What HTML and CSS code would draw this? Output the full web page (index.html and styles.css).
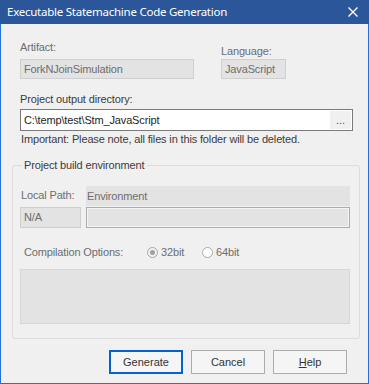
FILE: index.html
```html
<!DOCTYPE html>
<html>
<head>
<meta charset="utf-8">
<link rel="stylesheet" href="styles.css">
</head>
<body>
<div class="window">
  <div class="titlebar">
    <span class="title">Executable Statemachine Code Generation</span>
    <svg class="close" width="10" height="10" viewBox="0 0 10 10"><path d="M0.5 0.5L9.5 9.5M9.5 0.5L0.5 9.5" stroke="#fff" stroke-width="1.4" fill="none"/></svg>
  </div>
  <div class="body">
    <div class="toprow">
      <div class="col artifact">
        <div class="label dim">Artifact:</div>
        <div class="field ro">ForkNJoinSimulation</div>
      </div>
      <div class="col language">
        <div class="label dim lang-label">Language:</div>
        <div class="field ro">JavaScript</div>
      </div>
    </div>
    <div class="label dark outdir-label">Project output directory:</div>
    <div class="input">
      <span class="input-text">C:\temp\test\Stm_JavaScript</span>
      <span class="browse">...</span>
    </div>
    <div class="label dark note">Important: Please note, all files in this folder will be deleted.</div>
    <fieldset class="group">
      <legend class="legend">Project build environment</legend>
      <div class="envgrid">
        <div class="label dim lp">Local Path:</div>
        <div class="envhead">Environment</div>
        <div class="field ro na">N/A</div>
        <div class="field envfield"></div>
      </div>
      <div class="compile">
        <span class="label dim">Compilation Options:</span>
        <span class="radio checked"><span class="dot"></span></span><span class="rlabel dim">32bit</span>
        <span class="radio"></span><span class="rlabel dim">64bit</span>
      </div>
      <div class="bigbox"></div>
    </fieldset>
    <div class="buttons">
      <div class="btn default">Generate</div>
      <div class="btn">Cancel</div>
      <div class="btn"><u>H</u>elp</div>
    </div>
  </div>
</div>
</body>
</html>
```
FILE: styles.css
```css
* { box-sizing: border-box; }
html, body { margin: 0; padding: 0; }
body {
  width: 369px;
  height: 384px;
  overflow: hidden;
  font-family: "Liberation Sans", Arial, sans-serif;
  font-size: 11px;
  line-height: 13px;
  letter-spacing: -0.15px;
  color: #000;
}
.window {
  width: 369px;
  height: 384px;
  display: flex;
  flex-direction: column;
  background: #f0f0f0;
}
.titlebar {
  height: 24px;
  flex: none;
  background: #2b579a;
  display: flex;
  align-items: center;
  padding: 0 11px 0 7px;
  justify-content: space-between;
}
.title {
  font-family: "Noto Sans", "Open Sans", sans-serif;
  font-size: 11.5px;
  letter-spacing: -0.25px;
  color: #fff;
  line-height: 16px;
}
.close { display: block; }
.body {
  flex: 1;
  border: 1px solid #2470d6;
  border-top: none;
  padding: 17px 20px 0 19px;
  display: flex;
  flex-direction: column;
}
.label { white-space: nowrap; }
.dim { color: #6d6d6d; }
.dark { color: #3c3c3c; }
.toprow { display: flex; gap: 27px; }
.col { display: flex; flex-direction: column; }
.artifact { width: 174px; }
.language { width: 65px; }
.artifact .label { margin-bottom: 5px; }
.lang-label { margin-top: 4px; margin-bottom: 1px; }
.field {
  height: 20px;
  padding: 3px 3px;
  white-space: nowrap;
  overflow: hidden;
}
.ro {
  background: #e3e3e3;
  border: 1px solid #cfcfcf;
  color: #6d6d6d;
}
.outdir-label { margin-top: 14px; }
.input {
  margin-top: 3px;
  width: 333px;
  height: 22px;
  background: #fff;
  border: 1px solid #7a7a7a;
  display: flex;
  align-items: stretch;
  padding: 1px 1px 1px 3px;
  justify-content: space-between;
}
.input-text { color: #1e1e1e; line-height: 18px; }
.browse {
  width: 21px;
  background: #f0f0f0;
  color: #555;
  text-align: center;
  line-height: 18px;
  letter-spacing: 0;
}
.note { margin-top: 2px; margin-left: 1px; }
.group {
  margin: 13px 0 0 -8px;
  width: 348px;
  border: 1px solid #dcdcdc;
  border-radius: 3px;
  padding: 14px 9px 14px 7px;
}
.legend {
  padding: 0 3px 0 2px;
  margin-left: 2px;
  color: #3c3c3c;
}
.envgrid {
  display: grid;
  grid-template-columns: 61px 264px;
  column-gap: 5px;
  row-gap: 1px;
}
.lp { padding-top: 3px; margin-left: 1px; }
.envhead {
  height: 20px;
  background: #e3e3e3;
  color: #6d6d6d;
  padding: 4px 1px;
}
.na { height: 21px; }
.envfield {
  height: 21px;
  background: #e3e3e3;
  border: 1px solid #acacac;
  box-shadow: inset 0 0 0 1px #f4f4f4;
}
.compile {
  margin-top: 18px;
  display: flex;
  align-items: center;
  padding-left: 4px;
  height: 13px;
}
.compile .label { width: 123px; }
.radio {
  width: 11px;
  height: 11px;
  border-radius: 50%;
  border: 1px solid #a8a8a8;
  background: #fff;
  display: inline-flex;
  align-items: center;
  justify-content: center;
  margin-right: 3px;
}
.radio.checked { background: #f2f2f2; }
.dot { width: 5px; height: 5px; border-radius: 50%; background: #a0a0a0; }
.rlabel { margin-right: 18px; }
.bigbox {
  margin-top: 10px;
  height: 55px;
  background: #e3e3e3;
  border: 1px solid #d6d6d6;
}
.buttons {
  margin-top: 11px;
  display: flex;
  justify-content: flex-end;
  gap: 8px;
  padding-right: 1px;
}
.btn {
  width: 74px;
  height: 24px;
  border: 1px solid #adadad;
  background: #f5f5f5;
  color: #333;
  text-align: center;
  line-height: 22px;
  letter-spacing: 0;
}
.btn.default {
  border: 2px solid #0063cf;
  line-height: 20px;
}
.btn u { text-decoration: underline; }
```
